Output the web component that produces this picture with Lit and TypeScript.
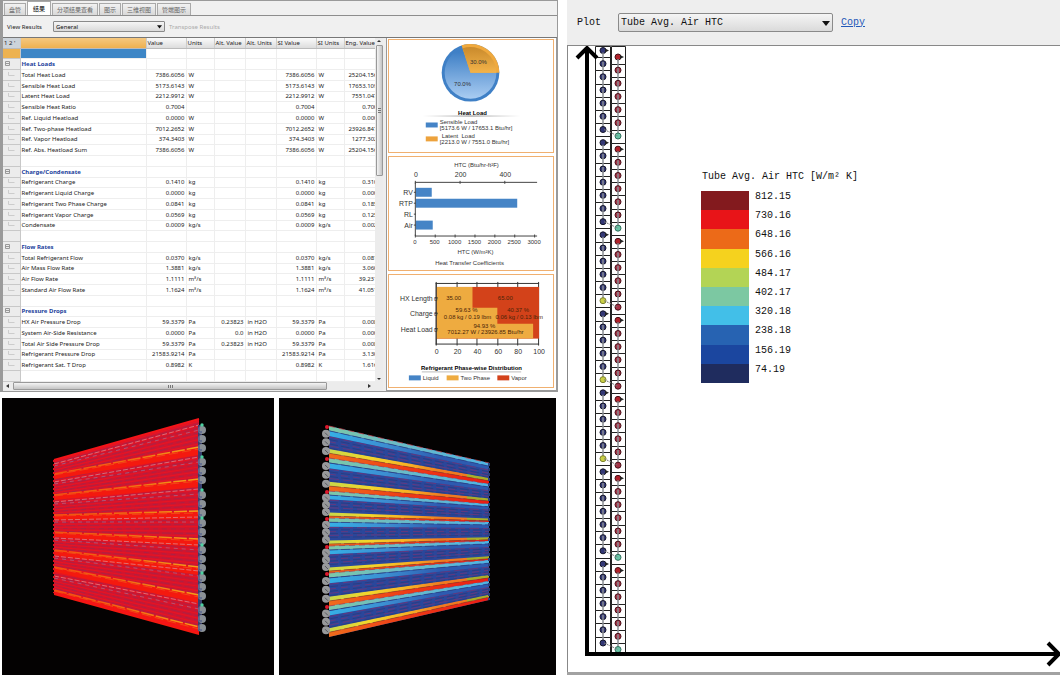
import { LitElement, html, svg, css } from "lit";
import { customElement } from "lit/decorators.js";

type Row = {
  kind: "group" | "item" | "blank" | "selected";
  cells: string[];
};

const group = (name: string): Row => ({ kind: "group", cells: [name] });
const item = (...cells: string[]): Row => ({ kind: "item", cells });
const blank: Row = { kind: "blank", cells: [] };

const ROWS: Row[] = [
  { kind: "selected", cells: [] },
  group("Heat Loads"),
  item("Total Heat Load", "7386.6056", "W", "", "", "7386.6056", "W", "25204.156"),
  item("Sensible Heat Load", "5173.6143", "W", "", "", "5173.6143", "W", "17653.109"),
  item("Latent Heat Load", "2212.9912", "W", "", "", "2212.9912", "W", "7551.047"),
  item("Sensible Heat Ratio", "0.7004", "", "", "", "0.7004", "", "0.700"),
  item("Ref. Liquid Heatload", "0.0000", "W", "", "", "0.0000", "W", "0.000"),
  item("Ref. Two-phase Heatload", "7012.2652", "W", "", "", "7012.2652", "W", "23926.847"),
  item("Ref. Vapor Heatload", "374.3403", "W", "", "", "374.3403", "W", "1277.302"),
  item("Ref. Abs. Heatload Sum", "7386.6056", "W", "", "", "7386.6056", "W", "25204.156"),
  blank,
  group("Charge/Condensate"),
  item("Refrigerant Charge", "0.1410", "kg", "", "", "0.1410", "kg", "0.310"),
  item("Refrigerant Liquid Charge", "0.0000", "kg", "", "", "0.0000", "kg", "0.000"),
  item("Refrigerant Two Phase Charge", "0.0841", "kg", "", "", "0.0841", "kg", "0.185"),
  item("Refrigerant Vapor Charge", "0.0569", "kg", "", "", "0.0569", "kg", "0.125"),
  item("Condensate", "0.0009", "kg/s", "", "", "0.0009", "kg/s", "0.002"),
  blank,
  group("Flow Rates"),
  item("Total Refrigerant Flow", "0.0370", "kg/s", "", "", "0.0370", "kg/s", "0.081"),
  item("Air Mass Flow Rate", "1.3881", "kg/s", "", "", "1.3881", "kg/s", "3.060"),
  item("Air Flow Rate", "1.1111", "m³/s", "", "", "1.1111", "m³/s", "39.231"),
  item("Standard Air Flow Rate", "1.1624", "m³/s", "", "", "1.1624", "m³/s", "41.051"),
  blank,
  group("Pressure Drops"),
  item("HX Air Pressure Drop", "59.3379", "Pa", "0.23823", "in H2O", "59.3379", "Pa", "0.008"),
  item("System Air-Side Resistance", "0.0000", "Pa", "0.0", "in H2O", "0.0000", "Pa", "0.000"),
  item("Total Air Side Pressure Drop", "59.3379", "Pa", "0.23823", "in H2O", "59.3379", "Pa", "0.008"),
  item("Refrigerant Pressure Drop", "21583.9214", "Pa", "", "", "21583.9214", "Pa", "3.130"),
  item("Refrigerant Sat. T Drop", "0.8982", "K", "", "", "0.8982", "K", "1.616"),
  blank,
];

const COLUMNS = ["Value", "Units", "Alt. Value", "Alt. Units", "SI Value", "SI Units", "Eng. Value"];
const TABS = ["盘管", "结果", "分项结果查看", "图示", "三维视图", "管端图示"];

const SCALE: [string, string][] = [
  ["#831a1e", "812.15"],
  ["#e81418", "730.16"],
  ["#ec6a18", "648.16"],
  ["#f5d21e", "566.16"],
  ["#b3d455", "484.17"],
  ["#7cc8a2", "402.17"],
  ["#42bfe8", "320.18"],
  ["#2763b2", "238.18"],
  ["#1b469f", "156.19"],
  ["#1f2c5e", "74.19"],
];

const BLUE = "#4584c6";
const ORANGE = "#eeab40";
const RED = "#d3421a";

/* Tubes per circuit, top to bottom. */
const CIRCUITS = [7, 7, 6, 6, 6, 7, 7];

@customElement("heat-load-chart")
class HeatLoadChart extends LitElement {
  static styles = css`
    :host { display: block; }
    svg { display: block; width: 100%; height: 100%; font-family: "Liberation Sans", sans-serif; font-size: 6px; fill: #333; }
    .title { font-weight: bold; fill: #000; text-anchor: middle; }
    .mid { text-anchor: middle; }
  `;
  render() {
    return html`<svg viewBox="0 0 165 113" role="img" aria-label="Heat Load">
      <defs>
        <linearGradient id="b" x1="0" y1="0" x2="0" y2="1">
          <stop offset="0.1" stop-color="#3f80c6" /><stop offset="1" stop-color="#a9ccf2" />
        </linearGradient>
        <linearGradient id="o" x1="0" y1="0" x2="0" y2="1">
          <stop offset="0" stop-color="#c98a2c" /><stop offset="1" stop-color="#f3b34a" />
        </linearGradient>
        <linearGradient id="r"><stop offset="0" stop-color="#999" stop-opacity="0" /><stop offset=".5" stop-color="#888" /><stop offset="1" stop-color="#999" stop-opacity="0" /></linearGradient>
      </defs>
      <circle cx="82" cy="33" r="29" fill="#3f80c6" />
      <circle cx="82" cy="33" r="26" fill="url(#b)" />
      <path d="M82 33H111A29 29 0 0 0 73 5.400Z" fill="#f0a93d" />
      <path d="M82 33H108A26 26 0 0 0 74 8.300Z" fill="url(#o)" />
      <text class="mid" x="90" y="24">30.0%</text>
      <text class="mid" x="74" y="46">70.0%</text>
      <text class="title" x="84" y="75">Heat Load</text>
      <rect x="34" y="76" width="98" height="1" fill="url(#r)" />
      <rect x="37" y="83" width="12" height="5" fill=${BLUE} />
      <rect x="37" y="97" width="12" height="5" fill="#eda23c" />
      <text x="51" y="85">Sensible Load</text>
      <text x="51" y="91">[5173.6 W / 17653.1 Btu/hr]</text>
      <text x="53" y="99">Latent&#160; Load</text>
      <text x="51" y="105">[2213.0 W / 7551.0 Btu/hr]</text>
    </svg>`;
  }
}

@customElement("htc-chart")
class HtcChart extends LitElement {
  static styles = css`
    :host { display: block; }
    svg { display: block; width: 100%; height: 100%; font-family: "Liberation Sans", sans-serif; font-size: 6px; fill: #333; }
    .mid { text-anchor: middle; }
    .end { text-anchor: end; font-size: 7px; }
    .big { font-size: 7px; }
    .axis { stroke: #444; fill: none; }
  `;
  render() {
    const bars: [string, number, number][] = [["RV", 31, 16], ["RTP", 42, 102], ["RL", 53, 0], ["Air", 64, 17]];
    return html`<svg viewBox="1 0 165 113" role="img" aria-label="Heat Transfer Coefficients">
      <text class="mid" x="89" y="10">HTC (Btu/hr-ft²F)</text>
      ${[0, 200, 400].map((v, i) => svg`<text class="mid big" x=${28 + i * 45} y="20">${v}</text>
        <path class="axis" d="M${27.5 + i * 45} 24v3" />`)}
      ${bars.map(([name, y, w]) => svg`<rect x="28" y=${y} width=${w} height="9" fill=${BLUE} />
        <text class="end" x="25" y=${y + 7}>${name}</text><path class="axis" d="M26 ${y + 4.5}h2" />`)}
      <path class="axis" d="M150 25.500H27.500V79.500H150" />
      ${[0, 500, 1000, 1500, 2000, 2500, 3000].map((v, i) => svg`<text class="mid" x=${27 + i * 20} y="88">${v}</text>
        <path class="axis" d="M${27.5 + i * 20} 78v3" />`)}
      <text class="mid" x="88" y="98">HTC (W/m²K)</text>
      <text class="mid" x="82" y="109">Heat Transfer Coefficients</text>
    </svg>`;
  }
}

@customElement("phase-chart")
class PhaseChart extends LitElement {
  static styles = css`
    :host { display: block; }
    svg { display: block; width: 100%; height: 100%; font-family: "Liberation Sans", sans-serif; font-size: 6px; fill: #333; }
    .mid { text-anchor: middle; }
    .end { text-anchor: end; font-size: 7px; }
    .big { font-size: 7px; }
    .on { fill: #4a2408; }
    .title { font-weight: bold; fill: #000; text-anchor: middle; }
    .axis { stroke: #333; fill: none; }
  `;
  render() {
    const notes: [string, number, number][] = [
      ["35.00", 66, 25], ["65.00", 118, 25],
      ["59.63 %", 79, 37], ["0.08 kg / 0.19 lbm", 80, 44],
      ["40.37 %", 131, 37], ["0.06 kg / 0.13 lbm", 132, 44],
      ["94.93 %", 97, 53], ["7012.27 W / 23926.85 Btu/hr", 98, 59],
    ];
    const ticks = [0, 20, 40, 60, 80, 100];
    return html`<svg viewBox="1 0 165 113" role="img" aria-label="Refrigerant Phase-wise Distribution">
      ${ticks.map((_, i) => svg`<path class="axis" d="M${48.5 + Math.round(i * 20.6)} 7v64" />`)}
      <path class="axis" d="M48 8.500H152M48 69.500H152" />
      <rect x="49" y="12" width="103" height="52" fill=${RED} />
      <path d="M49 12H85V33H110V49H146V64H49Z" fill=${ORANGE} />
      <path class="axis" d="M48.500 8V70M47 23h3M47 38.500h3M47 54h3" />
      ${[["HX Length", 26], ["Charge", 41], ["Heat Load", 57]].map(([t, y]) => svg`
        <text class="end" x="45" y=${y}>${t}</text><text class="mid" x="48" y=${y}>0</text>`)}
      ${notes.map(([t, x, y]) => svg`<text class="mid on" x=${x} y=${y}>${t}</text>`)}
      ${ticks.map((v, i) => svg`<text class="mid big" x=${49 + Math.round(i * 20.6)} y="80">${v}</text>`)}
      <text class="title" x="84" y="96">Refrigerant Phase-wise Distribution</text>
      <path d="M34 97.500H134" stroke="#bbb" />
      ${[["Liquid", 21, BLUE], ["Two Phase", 59, ORANGE], ["Vapor", 110, RED]].map(([t, x, c]) => svg`
        <rect x=${x} y="101" width="12" height="5" fill=${c} /><text x=${Number(x) + 14} y="106">${t}</text>`)}
    </svg>`;
  }
}

/* Perspective view of the coil, coloured by one value per tube. */
@customElement("coil-front")
class CoilFront extends LitElement {
  static styles = css`
    :host { display: block; background: #040202; overflow: hidden; }
    svg { display: block; width: 100%; height: 100%; }
  `;
  render() {
    const L = 52, R = 197;
    const yl = (t: number) => 63 + t * 131;
    const yr = (t: number) => 22 + t * 211;
    const rows = Array.from({ length: 92 }, (_, i) => (i + 0.5) / 92);
    const hot: [number, number][] = [[76, 49], [97, 81], [117, 113], [134, 141], [152, 169], [169, 197], [192, 229]];
    const pale: [number, number][] = [[66, 27], [84, 59], [104, 91], [122, 119], [140, 147], [158, 173], [178, 206]];
    return html`<svg viewBox="0 0 272 277" preserveAspectRatio="xMidYMin slice" role="img" aria-label="三维视图 1">
      <defs>
        <linearGradient id="ember" gradientUnits="userSpaceOnUse" x1="52" y1="0" x2="197" y2="0"><stop offset="0" stop-color="#f4500f" /><stop offset=".5" stop-color="#f06a12" /><stop offset="1" stop-color="#f5a01a" /></linearGradient>
      </defs>
      <path d="M${L} 62L${R} 21V234L${L} 195Z" fill="#cf1630" />
      ${rows.map((t, i) => svg`<path d="M${L} ${yl(t)}L${R} ${yr(t)}" stroke=${i % 2 ? "#84305c" : "#ee1420"}
        stroke-width=${i % 2 ? 0.8 : 1.1} stroke-dasharray=${i % 4 === 1 ? "9 3" : i % 4 === 3 ? "5 4" : "none"} stroke-opacity=${i % 2 ? 0.55 : 0.8} />`)}
      ${hot.map(([a, b]) => svg`
        <path d="M${L} ${a}L${R} ${b}V${b + 8}L${L} ${a + 5}Z" fill="#f4190f" />
        <path d="M${L} ${a}L${R} ${b}" stroke="url(#ember)" stroke-width="1.500" stroke-dasharray="13 2" />
        <path d="M${L} ${a + 1}L${R} ${b + 2}" stroke="#f0501a" stroke-width="0.800" stroke-dasharray="9 4" />`)}
      ${pale.map(([a, b]) => svg`
        <path d="M${L} ${a}L${R} ${b}" stroke="#dc9098" stroke-width="0.7" stroke-dasharray="5 2" />
        <path d="M${L} ${a + 2}L${R} ${b + 5}" stroke="#9a7ea6" stroke-width="0.6" stroke-dasharray="4 4" />`)}
      <path d="M${L} 62L${R} 21" stroke="#f41418" stroke-width="2" />
      <path d="M${L} 195L${R} 234" stroke="#f41418" stroke-width="2" />
      <path d="M${L} 62V195" stroke="#e01020" stroke-width="2" stroke-dasharray="2 2" />
      <rect x="196" y="27" width="4" height="206" fill="#39406f" />
      ${[30, 62, 95, 123, 150, 178, 210].map((y) => svg`
        ${[2, 11, 20].map((d) => svg`<circle cx="200" cy=${y + d} r="4" fill="#8b9096" /><path d="M197 ${y + d - 3}v5h3" fill="none" stroke="#44528c" stroke-width="1.200" />`)}
        <circle cx="200" cy=${y - 3} r="1.700" fill="#4fd0a0" />`)}
    </svg>`;
  }
}

@customElement("coil-back")
class CoilBack extends LitElement {
  static styles = css`
    :host { display: block; background: #040202; overflow: hidden; }
    svg { display: block; width: 100%; height: 100%; }
  `;
  render() {
    const L = 50, R = 210;
    const left = [28, 60, 93, 120, 148, 175, 208, 239];
    const right = [65, 86, 106, 124, 143, 162, 183, 202];
    const band = (i: number, a: number, b: number, fill: string) => {
      const l = (t: number) => left[i] + (left[i + 1] - left[i]) * t;
      const r = (t: number) => right[i] + (right[i + 1] - right[i]) * t;
      return svg`<path d="M${L} ${l(a)}L${R} ${r(a)}V${r(b)}L${L} ${l(b)}Z" fill=${fill} />`;
    };
    const line = (i: number, t: number, stroke: string, w: number, dash: string) => svg`<path
      d="M${L} ${left[i] + (left[i + 1] - left[i]) * t}L${R} ${right[i] + (right[i + 1] - right[i]) * t}"
      stroke=${stroke} stroke-width=${w} stroke-dasharray=${dash} />`;
    return html`<svg viewBox="0 0 277 277" preserveAspectRatio="xMidYMin slice" role="img" aria-label="三维视图 2">
      <defs>
        <linearGradient id="teal"><stop offset="0" stop-color="#7cc8a8" /><stop offset=".4" stop-color="#6cbcc4" /><stop offset="1" stop-color="#4fb4e4" /></linearGradient>
        <linearGradient id="sky"><stop offset="0" stop-color="#36b0e6" /><stop offset=".35" stop-color="#3c8fd2" /><stop offset=".7" stop-color="#2d5bb0" /></linearGradient>
        <linearGradient id="yel"><stop offset="0" stop-color="#c8d84a" /><stop offset=".25" stop-color="#f2d62c" /><stop offset=".5" stop-color="#f8b024" /><stop offset=".7" stop-color="#f07a20" /><stop offset=".86" stop-color="#f07a20" /><stop offset=".86" stop-color="#a9ae28" /></linearGradient>
        <linearGradient id="hot"><stop offset="0" stop-color="#f06c1c" /><stop offset=".5" stop-color="#ee3a16" /><stop offset="1" stop-color="#ec1c14" /></linearGradient>
      </defs>
      <path d="M${L} 28L${R} 65V202L${L} 239Z" fill="#2a479b" />
      ${CIRCUITS.map((n, i) => {
        const yellow = n === 7 ? 0.72 : 0.8;
        const end = n === 7 ? 0.85 : 0.93;
        return svg`
          ${band(i, 0, 0.14, "url(#teal)")}
          ${band(i, 0.16, 0.31, "url(#sky)")}
          ${band(i, yellow, end, "url(#yel)")}
          ${band(i, end, 1, "url(#hot)")}
          ${[0.34, 0.49, 0.62].map((t, k) => line(i, t, "#8c2f6a", 0.6, k % 2 ? "7 5" : "10 4"))}
          ${[0.15, 0.42, 0.56, 0.69].map((t) => line(i, t, "#2a3574", 0.6, "9 3"))}
          ${line(i, end, "#8a3410", 0.5, "12 3")}
          ${line(i, 0, "#c43038", 0.7, "6 4")}`;
      })}
      <path d="M${R} 65V202" stroke="#27407c" stroke-width="2" stroke-dasharray="3 2" />
      ${CIRCUITS.map((_, i) => svg`
        ${[0.24, 0.51, 0.78].map((t) => svg`<circle cx="47" cy=${left[i] + (left[i + 1] - left[i]) * t} r="4" fill="#98999b" /><path d="M46 ${left[i] + (left[i + 1] - left[i]) * t - 1}l3 3" stroke="#55585c" />`)}
        <circle cx="48" cy=${left[i] + 1} r="2" fill="#e0182c" />`)}
    </svg>`;
  }
}

/* Side view of the two tube banks on a pair of axes. */
@customElement("tube-diagram")
class TubeDiagram extends LitElement {
  static styles = css`
    :host { display: block; }
    svg { display: block; width: 100%; }
    .cell { fill: #fff; stroke: #222; }
    .axis { fill: none; stroke: #000; stroke-width: 4; }
    .bend { stroke: #8b8f94; stroke-width: 1.500; }
    .link { stroke: #777; stroke-dasharray: 2 1; }
  `;
  render() {
    const pitch = 592.5 / 45;
    const y1 = (i: number) => 4.5 + i * pitch;
    const y2 = (i: number) => 11 + i * pitch;
    const cells: unknown[] = [];
    const tubes: unknown[] = [];
    let k = 0;
    CIRCUITS.forEach((n) => {
      for (let j = 0; j < n; j++, k++) {
        const last = j === n - 1;
        const a = last && n === 6 ? "#c9cf45" : "#323775";
        const b = last && n === 7 ? "#69c3a6" : j === 0 ? "#b0222a" : "#a63246";
        const ca = k === 0 ? 0 : Math.round(y1(k) - 6.5);
        const cb = k === 0 ? 0 : Math.round(y2(k) - 6.5);
        cells.push(svg`<path class="cell" d="M27.500 ${ca + 0.5}H42.500V608H27.500Z" /><path class="cell" d="M43.500 ${cb + 0.5}H57.500V608H43.500Z" />`);
        tubes.push(svg`
          <circle cx="35" cy=${y1(k)} r="3" fill=${a} stroke=${last && n === 6 ? "#7c8030" : "#15162a"} /><circle cx="50" cy=${y2(k)} r="3" fill=${b} stroke=${last && n === 7 ? "#30705c" : "#4a1018"} />
          ${j === 0 ? svg`<path d="M37 ${y1(k) - 2}l4 2l-4 2z" fill="#222" /><path d="M52 ${y2(k) - 2}l4 2l-4 2z" fill="#222" />` : ""}
          ${last ? svg`<path class="link" d="M36 ${y1(k)}L50 ${y2(k)}" />` : ""}`);
        if (!last) {
          tubes.push(svg`<path class="bend" d="M35 ${y1(k) + (j ? -2 : 2)}V${y1(k + 1) + 1}M50 ${y2(k) + (j ? -2 : 2)}V${y2(k + 1) + 1}" />`);
        }
      }
    });
    return html`<svg viewBox="0 0 492 626" role="img" aria-label="Tube Avg. Air HTC">
      ${cells}${tubes}
      <path class="axis" d="M19 2V608H490" />
      <path class="axis" d="M9 12L19 2L29 12M480 597L491 608L480 619" />
    </svg>`;
  }
}

@customElement("app-root")
export class AppRoot extends LitElement {
  static styles = css`
    * { box-sizing: border-box; }
    :host { display: block; background: #fff; color: #222; font-family: "Noto Sans", "Noto Sans CJK SC", sans-serif; font-size: 6px; }
    .page { display: grid; grid-template-columns: 558fr 493fr; column-gap: 9px; height: 100vh; }
    .left { display: grid; grid-template-rows: 392fr 277fr; row-gap: 6px; min-width: 0; min-height: 0; }

    .window { display: flex; flex-direction: column; min-height: 0; background: #f0f0f0; border: solid #9a9a9a; border-width: 1px 1px 2px 3px; }
    .tabs { display: flex; align-items: flex-end; height: 15px; padding-left: 1px; gap: 1px; border-bottom: 1px solid #8d8d8d; }
    .tab { height: 12px; padding: 0 4px; border: 1px solid #a9a9a9; border-bottom: 0; background: linear-gradient(#f2f2f2, #d8d8d8); color: #666; font: 6px/10px "Noto Sans CJK SC", sans-serif; white-space: nowrap; }
    .tab.active { height: 14px; padding: 0 5px; background: #fff; color: #000; }
    .toolbar { display: flex; align-items: center; height: 21px; padding: 0 4px; }
    .toolbar label { width: 46px; }
    .view { width: 112px; height: 11px; }
    .muted { margin-left: 4px; padding: 0; border: 0; background: none; color: #aaa; font: inherit; }
    select { appearance: none; margin: 0; padding: 0 2px; border: 1px solid #8a8a8a; border-radius: 1px; color: #111; font: inherit; background: linear-gradient(#f5f5f5, #dadada); }
    .drop { display: grid; align-items: center; }
    .drop > * { grid-area: 1 / 1; }
    .drop svg { justify-self: end; margin-right: 3px; pointer-events: none; }

    .content { flex: 1; display: grid; grid-template-columns: minmax(0, 1fr) 171px; min-height: 0; border-top: 1px solid #777; }
    .results { display: grid; grid-template-columns: minmax(0, 1fr) 8px; grid-template-rows: minmax(0, 1fr) 9px; padding-right: 3px; min-height: 0; background: #eee; }
    .sheet { overflow: hidden; background: #fff; }
    table { width: 376px; height: 100%; table-layout: fixed; border-collapse: collapse; }
    tbody tr { height: 10px; }
    th, td { padding: 0 2px; line-height: 8px; white-space: nowrap; border-right: 1px solid #eee; border-bottom: 1px solid #eee; }
    th { height: 10px; padding: 0 1px; font-weight: normal; text-align: left; background: linear-gradient(#fafafa, #dcdcdc); border-right-color: #ccc; border-bottom-color: #bbb; }
    .corner { background: #ccd3da; }
    .name-head { background: linear-gradient(#f5c880, #edb050); }
    .num { text-align: right; padding-right: 1px; }
    .name { padding-left: 1px; }
    .gutter { background: #ececec; border-color: #c8c8c8; color: #999; padding: 0 2px; }
    .gutter svg { display: block; }
    .selected .gutter { background: #edb250; }
    .selected .name { background: #3d86c6; }
    .group .name { color: #1c3f9c; font-weight: bold; }
    .vbar, .hbar { display: flex; align-items: center; background: #ececec; }
    .vbar { flex-direction: column; padding: 1px 0; }
    .hbar { grid-column: 1 / 3; padding: 0 3px; gap: 4px; }
    .vthumb { flex: 0 0 131px; width: 7px; margin-top: 2px; border: 1px solid #999; border-radius: 1px; background: linear-gradient(90deg, #f4f4f4, #c4c4c4); display: grid; place-items: center; }
    .hthumb { flex: 0 0 314px; height: 8px; border: 1px solid #999; border-radius: 1px; background: linear-gradient(#f4f4f4, #c4c4c4); display: grid; place-items: center; }
    .push { flex: 1; }
    .charts { display: grid; grid-template-rows: repeat(3, minmax(0, 1fr)); gap: 3px; padding: 1px 2px 2px 1px; border: 1px solid #999; border-top: 0; background: #fff; }
    .chart { border: 1px solid #f0b070; min-height: 0; }

    .views { display: grid; grid-template-columns: 272fr 277fr; gap: 5px; padding: 0 2px; min-height: 0; }
    .right { display: flex; flex-direction: column; min-height: 0; min-width: 0; font: 10px/12px "Liberation Mono", monospace; color: #111; background: #fff; border-bottom: 3px solid #a2a2a2; }
    .plotbar { flex: none; display: flex; align-items: center; height: 45px; padding-left: 10px; background: #eee; }
    .plotbar label { width: 41px; }
    .metric { width: 215px; height: 19px; border-radius: 2px; }
    .plotbar a { margin-left: 8px; color: #2358b8; }
    .canvas { flex: 1; display: grid; grid-template-columns: minmax(0, 1fr); align-items: start; border: solid #888; border-width: 1px 0 0 1px; min-height: 0; overflow: hidden; }
    .canvas > * { grid-area: 1 / 1; }
    .legend { margin: 125px 0 0 133px; }
    .legend h2 { margin: 0 0 8px 1px; font: inherit; }
    .scale { display: grid; grid-auto-rows: 1fr; height: 192px; margin: 0; padding: 0; list-style: none; }
    .scale li { display: flex; gap: 6px; }
    .swatch { width: 48px; }
  `;

  private gutter(row: Row) {
    if (row.kind === "group") {
      return html`<svg width="12" height="6" viewBox="0 0 12 6"><path d="M.5.5h4v4h-4zM1 2.500h3" fill="none" stroke="#999" /></svg>`;
    }
    return row.kind === "item"
      ? html`<svg width="12" height="6" viewBox="0 0 12 6"><path d="M3.500 0v3.500h6" fill="none" stroke="#ccc" /></svg>`
      : "";
  }

  private arrow(size: number) {
    return html`<svg width=${size} height=${size} viewBox="0 0 8 8" aria-hidden="true"><path d="M0 2h8L4 7z" fill="#111" /></svg>`;
  }

  render() {
    return html`<div class="page">
      <div class="left">
        <section class="window">
          <nav class="tabs">${TABS.map((t, i) => html`<button class="tab ${i === 1 ? "active" : ""}">${t}</button>`)}</nav>
          <div class="toolbar">
            <label for="view">View Results</label>
            <span class="drop"><select id="view" class="view"><option>General</option></select>${this.arrow(5)}</span>
            <button class="muted" disabled>Transpose Results</button>
          </div>
          <div class="content">
            <div class="results">
              <div class="sheet">
                <table>
                  <colgroup>
                    <col style="width:17px"><col style="width:126px"><col style="width:40px"><col style="width:28px"><col style="width:31px"><col style="width:31px"><col style="width:40px"><col style="width:28px"><col style="width:35px">
                  </colgroup>
                  <thead><tr><th class="corner">1 2 '</th><th class="name-head"></th>${COLUMNS.map((c) => html`<th>${c}</th>`)}</tr></thead>
                  <tbody>${ROWS.map((row) => html`<tr class=${row.kind}>
                    <td class="gutter">${this.gutter(row)}</td>
                    <td class="name">${row.cells[0] ?? ""}</td>
                    ${COLUMNS.map((_, i) => html`<td class=${i % 2 ? "" : "num"}>${row.cells[i + 1] ?? ""}</td>`)}
                  </tr>`)}</tbody>
                </table>
              </div>
              <div class="vbar">
                <svg width="4" height="4" viewBox="0 0 4 4"><path d="M0 3h4L2 1z" fill="#333" /></svg>
                <div class="vthumb"><svg width="3" height="5"><path d="M0 .5h3M0 2.500h3M0 4.500h3" stroke="#777" /></svg></div>
                <span class="push"></span>
                <svg width="4" height="4" viewBox="0 0 4 4"><path d="M0 1h4L2 3z" fill="#333" /></svg>
              </div>
              <div class="hbar">
                <svg width="3" height="4" viewBox="0 0 3 4"><path d="M3 0v4L0 2z" fill="#333" /></svg>
                <div class="hthumb"><svg width="5" height="3"><path d="M.5 0v3M2.500 0v3M4.500 0v3" stroke="#777" /></svg></div>
                <span class="push"></span>
                <svg width="12" height="4" viewBox="0 0 12 4"><path d="M0 0v4l3-2z" fill="#333" /></svg>
              </div>
            </div>
            <div class="charts">
              <heat-load-chart class="chart"></heat-load-chart>
              <htc-chart class="chart"></htc-chart>
              <phase-chart class="chart"></phase-chart>
            </div>
          </div>
        </section>
        <div class="views"><coil-front></coil-front><coil-back></coil-back></div>
      </div>
      <section class="right">
        <div class="plotbar">
          <label for="metric">Plot</label>
          <span class="drop"><select id="metric" class="metric"><option>Tube Avg. Air HTC</option></select>${this.arrow(8)}</span>
          <a href="#">Copy</a>
        </div>
        <div class="canvas">
          <tube-diagram></tube-diagram>
          <div class="legend">
            <h2>Tube Avg. Air HTC [W/m² K]</h2>
            <ul class="scale">${SCALE.map(([c, v]) => html`<li><span class="swatch" style="background:${c}"></span>${v}</li>`)}</ul>
          </div>
        </div>
      </section>
    </div>`;
  }
}
